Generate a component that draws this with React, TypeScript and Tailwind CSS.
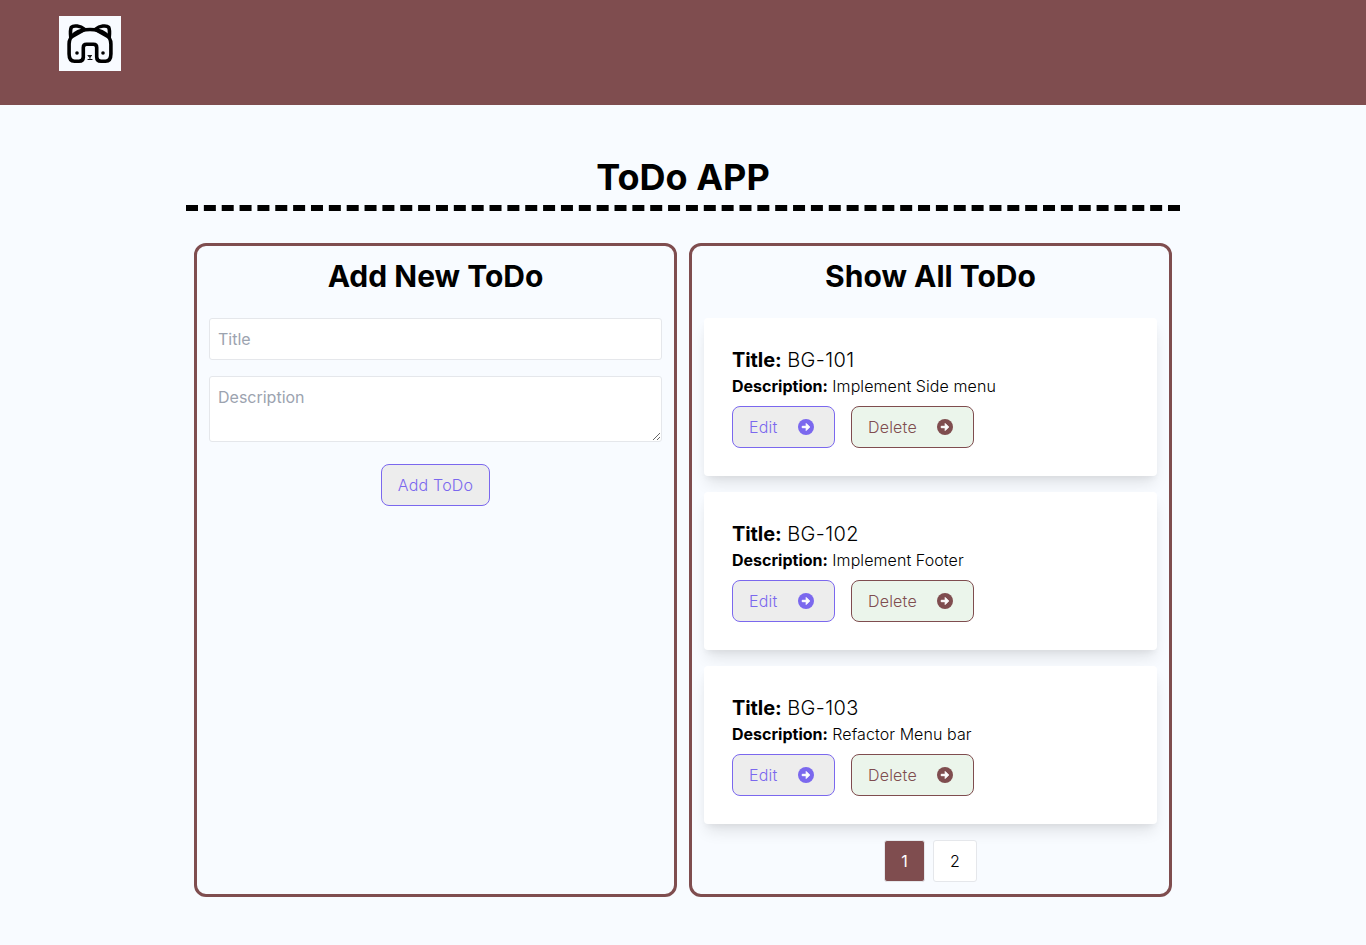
import React from "react";

const todos = [
  { title: "BG-101", description: "Implement Side menu" },
  { title: "BG-102", description: "Implement Footer" },
  { title: "BG-103", description: "Refactor Menu bar" },
];

function ArrowIcon() {
  return (
    <svg className="mr-[18px] h-5 w-5" viewBox="0 0 20 20">
      <circle cx="10" cy="10" r="8" fill="currentColor" />
      <path
        d="M6.200 9.300H10.200V6.500L13.700 10L10.200 13.500V10.700H6.200Z"
        fill="#fff"
        stroke="#fff"
        strokeWidth="1"
        strokeLinejoin="round"
      />
    </svg>
  );
}

function Logo() {
  return (
    <svg
      className="h-[55px] w-[62px] bg-[#f8fbff]"
      viewBox="0 0 62 55"
      fill="none"
      stroke="#000"
      strokeWidth="3.600"
      strokeLinecap="round"
      strokeLinejoin="round"
    >
      <path d="M24.300 42V31.500Q24.300 28.200 27.500 28.200H34.500Q37.700 28.200 37.700 31.500V41Q37.700 45.200 42 45.200H46.500Q51.900 45.200 51.900 38V28C51.900 19 43 13.500 31 13.500S10.100 19 10.100 28V38Q10.100 45.200 15.500 45.200H20Q24.300 45.200 24.300 41" />
      <path d="M11.800 21.500C11.300 17 11.200 13.500 12.400 11.200C14.500 9 21.500 9.800 25.200 13M50.200 21.500C50.700 17 50.800 13.500 49.600 11.200C47.500 9 40.500 9.800 36.800 13" />
      <path strokeWidth="2.600" d="M13 21L24.500 14.500M49 21L37.500 14.500" />
      <circle cx="18" cy="37" r="1.800" fill="#000" stroke="none" />
      <circle cx="44" cy="37" r="1.800" fill="#000" stroke="none" />
      <path d="M29.200 39.500H32.800L31 41.300ZM31 41V43" fill="#000" strokeWidth="0.800" />
      <path d="M29 43.500H33" strokeWidth="1.100" />
    </svg>
  );
}

export default function App() {
  return (
    <div className="h-[945px] overflow-hidden bg-[#f8fbff] font-['Inter',sans-serif] text-base font-light text-black">
      <header className="h-[105px] bg-[#7f4d4f] pt-4 pl-[59px]">
        <Logo />
      </header>
      <main className="mx-auto w-[994px] pt-[52px]">
        <h1 className="h-[54px] border-b-[6px] border-dashed border-black text-center text-4xl font-[650]">
          ToDo APP
        </h1>
        <div className="mx-2 mt-8 grid h-[654px] grid-cols-2 gap-3">
          <section className="rounded-xl border-[3px] border-[#7f4d4f] px-3 pt-3">
            <h2 className="text-center text-3xl font-[650]">Add New ToDo</h2>
            <form className="mt-6 flex flex-col items-center">
              <input
                placeholder="Title"
                className="h-[42px] w-full rounded-[3px] border border-gray-200 bg-white px-2 font-normal placeholder:text-[#9ca3af]"
              />
              <textarea
                placeholder="Description"
                className="mt-4 h-[66px] w-full rounded-[3px] border border-gray-200 bg-white p-2 font-normal placeholder:text-[#9ca3af]"
              />
              <button
                type="button"
                className="mt-[22px] h-[42px] w-[109px] rounded-lg border border-[#7b68ee] bg-[#ededed] tracking-[0.2px] text-[#7b68ee]"
              >
                Add ToDo
              </button>
            </form>
          </section>
          <section className="rounded-xl border-[3px] border-[#7f4d4f] px-3 pt-3">
            <h2 className="text-center text-3xl font-[650]">Show All ToDo</h2>
            <div className="mt-6 flex flex-col gap-4">
              {todos.map((todo) => (
                <article
                  key={todo.title}
                  className="rounded bg-white p-7 shadow-[0_10px_15px_-3px_rgba(0,0,0,0.1),0_4px_6px_-2px_rgba(0,0,0,0.05)]"
                >
                  <h3 className="text-xl leading-7">
                    <span className="font-[650] tracking-[-0.1px]">Title:</span>{" "}
                    <span className="tracking-[0.4px]">{todo.title}</span>
                  </h3>
                  <p className="leading-6">
                    <span className="font-[650]">Description:</span>{" "}
                    <span className="tracking-[0.08px]">{todo.description}</span>
                  </p>
                  <div className="mt-2 flex gap-4 tracking-[0.2px]">
                    <button className="flex h-[42px] w-[103px] items-center justify-between rounded-lg border border-[#7b68ee] bg-[#ededed] pl-4 text-[#7b68ee]">
                      Edit
                      <ArrowIcon />
                    </button>
                    <button className="flex h-[42px] w-[123px] items-center justify-between rounded-lg border border-[#7f4d4f] bg-[#ebf5eb] pl-4 text-[#7f4d4f]">
                      Delete
                      <ArrowIcon />
                    </button>
                  </div>
                </article>
              ))}
            </div>
            <nav className="mt-4 flex justify-center gap-2">
              <button className="h-[42px] w-[41px] rounded-[3px] border border-gray-200 bg-[#7f4d4f] font-normal text-white">
                1
              </button>
              <button className="h-[42px] w-11 rounded-[3px] border border-gray-200 bg-white">2</button>
            </nav>
          </section>
        </div>
      </main>
    </div>
  );
}
